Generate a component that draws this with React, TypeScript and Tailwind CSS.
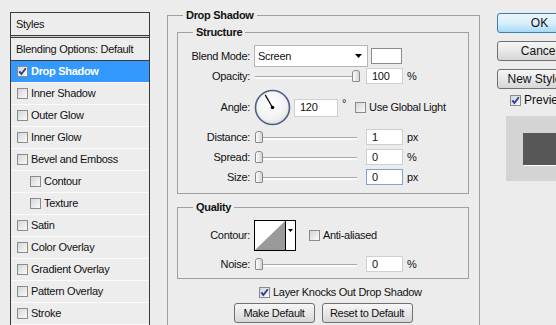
import React from "react";

function Check({ checked }: { checked?: boolean }) {
  return (
    <span className="flex h-[11px] w-[11px] shrink-0 items-center justify-center border border-[#8b8b8b] bg-linear-to-br from-[#d6d6d6] to-[#fafafa]">
      {checked && (
        <svg width="9" height="9" viewBox="0 0 9 9">
          <path d="M1.3 4.3 L3.4 7 L7.8 1.2" stroke="#2b3f98" strokeWidth="1.9" fill="none" />
        </svg>
      )}
    </span>
  );
}

function Slider({ pos }: { pos: number }) {
  return (
    <div className="relative h-[16px] w-[104px] shrink-0">
      <div className="absolute left-[1px] right-[1px] top-[8px] h-[3px] border-t border-[#a9a9a9] bg-[#fafafa]" />
      <svg className="absolute top-[2px]" style={{ left: pos }} width="8" height="12" viewBox="0 0 8 12">
        <defs>
          <linearGradient id={"tg" + pos} x1="0" y1="0" x2="1" y2="0">
            <stop offset="0" stopColor="#ffffff" />
            <stop offset="1" stopColor="#d2d2d2" />
          </linearGradient>
        </defs>
        <path d="M0.5 11 V3 Q0.5 0.5 3 0.5 H5 Q7.5 0.5 7.5 3 V11 Q7.5 11.5 7 11.5 H1 Q0.5 11.5 0.5 11 Z" fill={"url(#tg" + pos + ")"} stroke="#8a8a8a" />
      </svg>
    </div>
  );
}

function Num({ v, focus, w }: { v: string; focus?: boolean; w?: string }) {
  return (
    <div
      className={
        "flex h-[16px] shrink-0 items-center bg-white pl-[5px] " +
        (w ?? "w-[37px] ") +
        " border " +
        (focus ? "border-[#7ea4d2]" : "border-[#cfcfcf]")
      }
    >
      {v}
    </div>
  );
}

function Label({ children }: { children: React.ReactNode }) {
  return <div className="w-[72px] shrink-0 text-right">{children}</div>;
}

function Btn({ children, w }: { children: React.ReactNode; w: string }) {
  return (
    <div
      className={
        "flex h-[20px] shrink-0 items-center justify-center rounded-[3px] border border-[#707070] bg-linear-to-b from-[#f6f6f6] via-[#e8e8e8] to-[#d6d6d6] " +
        w
      }
    >
      {children}
    </div>
  );
}

const items: { label: string; checked?: boolean; active?: boolean; sub?: boolean }[] = [
  { label: "Drop Shadow", checked: true, active: true },
  { label: "Inner Shadow" },
  { label: "Outer Glow" },
  { label: "Inner Glow" },
  { label: "Bevel and Emboss" },
  { label: "Contour", sub: true },
  { label: "Texture", sub: true },
  { label: "Satin" },
  { label: "Color Overlay" },
  { label: "Gradient Overlay" },
  { label: "Pattern Overlay" },
  { label: "Stroke" },
];

export default function App() {
  return (
    <div className="flex h-[325px] w-[556px] overflow-hidden bg-[#ececec] font-['Liberation_Sans',Arial,sans-serif] text-[11px] leading-[13px] tracking-[-0.3px] text-[#111]">
      {/* Left styles list */}
      <div className="ml-[10px] mt-[12px] h-[340px] w-[140px] shrink-0 border border-[#3a3a3a] bg-[#ededed]">
        <div className="flex h-[22px] items-center pl-[5px]">Styles</div>
        <div className="h-[3px] border-y border-[#3a3a3a] bg-[#d0d0d0]" />
        <div className="flex h-[23px] items-center border-b border-[#3a3a3a] pl-[5px]">Blending Options: Default</div>
        {items.map((it) => (
          <div
            key={it.label}
            className={
              "flex h-[22px] items-center gap-[3px] border-b " +
              (it.sub ? "pl-[19px] " : "pl-[6px] ") +
              (it.active ? "border-[#fafafa] bg-[#3399ff] font-bold text-white" : "border-[#fafafa]")
            }
          >
            <Check checked={it.checked} />
            <span>{it.label}</span>
          </div>
        ))}
      </div>

      {/* Middle */}
      <fieldset className="ml-[17px] mt-[8px] h-[340px] w-[313px] shrink-0 border border-[#9f9f9f] p-0 pl-[9px] pr-[10px]">
        <legend className="ml-[6px] px-[3px] font-bold leading-[14px]">Drop Shadow</legend>

        <fieldset className="mt-[3px] w-[292px] border border-[#9f9f9f] p-0 pb-[8px]">
          <legend className="ml-[15px] px-[3px] font-bold leading-[14px]">Structure</legend>
          <div className="mt-[6px] flex h-[22px] items-center">
            <Label>Blend Mode:</Label>
            <div className="ml-[4px] flex h-[22px] w-[114px] items-center justify-between border border-[#b5b5b5] bg-white pl-[3px] pr-[5px]">
              <span>Screen</span>
              <svg width="7" height="4" viewBox="0 0 7 4">
                <path d="M0 0 H7 L3.5 4 Z" fill="#000" />
              </svg>
            </div>
            <div className="ml-[3px] h-[16px] w-[31px] border border-[#8c8c8c] bg-white" />
          </div>
          <div className="mt-[1px] flex h-[16px] items-center">
            <Label>Opacity:</Label>
            <div className="ml-[4px]">
              <Slider pos={98} />
            </div>
            <div className="ml-[8px]">
              <Num v="100" />
            </div>
            <span className="ml-[4px]">%</span>
          </div>
          <div className="mt-[5px] flex h-[37px] items-center">
            <Label>Angle:</Label>
            <svg className="ml-[4px] shrink-0" width="37" height="37" viewBox="0 0 37 37">
              <defs>
                <radialGradient id="dial" cx="0.45" cy="0.4" r="0.65">
                  <stop offset="0" stopColor="#ffffff" />
                  <stop offset="0.7" stopColor="#f1f1f1" />
                  <stop offset="1" stopColor="#d9d9d9" />
                </radialGradient>
              </defs>
              <circle cx="18.5" cy="18.5" r="17" fill="url(#dial)" stroke="#4d5e88" strokeWidth="1.6" />
              <line x1="18.5" y1="18.5" x2="11.2" y2="5.9" stroke="#000" strokeWidth="1.2" />
              <circle cx="18.5" cy="18.5" r="1.8" fill="#000" />
            </svg>
            <div className="ml-[3px]">
              <Num v="120" w="w-[44px] h-[18px] " />
            </div>
            <span className="ml-[4px] self-start pt-[8px]">°</span>
            <div className="ml-[9px] flex items-center gap-[3px]">
              <Check />
              <span>Use Global Light</span>
            </div>
          </div>
          <div className="mt-[3px] flex h-[16px] items-center">
            <Label>Distance:</Label>
            <div className="ml-[4px]">
              <Slider pos={1} />
            </div>
            <div className="ml-[8px]">
              <Num v="1" />
            </div>
            <span className="ml-[4px]">px</span>
          </div>
          <div className="mt-[4px] flex h-[16px] items-center">
            <Label>Spread:</Label>
            <div className="ml-[4px]">
              <Slider pos={1} />
            </div>
            <div className="ml-[8px]">
              <Num v="0" />
            </div>
            <span className="ml-[4px]">%</span>
          </div>
          <div className="mt-[4px] flex h-[16px] items-center">
            <Label>Size:</Label>
            <div className="ml-[4px]">
              <Slider pos={1} />
            </div>
            <div className="ml-[8px]">
              <Num v="0" focus />
            </div>
            <span className="ml-[4px]">px</span>
          </div>
        </fieldset>

        <fieldset className="mt-[6px] w-[292px] border border-[#9f9f9f] p-0 pb-[6px]">
          <legend className="ml-[15px] px-[3px] font-bold leading-[14px]">Quality</legend>
          <div className="mt-[6px] flex h-[31px] items-center">
            <Label>Contour:</Label>
            <svg className="ml-[4px] shrink-0" width="42" height="31" viewBox="0 0 42 31">
              <rect x="0.5" y="0.5" width="41" height="30" fill="#fff" stroke="#000" />
              <polygon points="1,30 31,1 31,30" fill="#9a9a9a" />
              <line x1="31.5" y1="1" x2="31.5" y2="30" stroke="#000" />
              <path d="M34 9 H39 L36.5 12 Z" fill="#000" />
            </svg>
            <div className="ml-[13px] flex items-center gap-[3px]">
              <Check />
              <span>Anti-aliased</span>
            </div>
          </div>
          <div className="mt-[5px] flex h-[16px] items-center">
            <Label>Noise:</Label>
            <div className="ml-[4px]">
              <Slider pos={1} />
            </div>
            <div className="ml-[8px]">
              <Num v="0" />
            </div>
            <span className="ml-[4px]">%</span>
          </div>
        </fieldset>

        <div className="ml-[82px] mt-[7px] flex h-[13px] items-center gap-[3px]">
          <Check checked />
          <span>Layer Knocks Out Drop Shadow</span>
        </div>
        <div className="mt-[4px] flex justify-center gap-[7px]">
          <Btn w="w-[81px]">Make Default</Btn>
          <Btn w="w-[91px]">Reset to Default</Btn>
        </div>
      </fieldset>

      {/* Right column */}
      <div className="ml-[17px] mt-[13px] flex w-[85px] shrink-0 flex-col text-[12px] tracking-normal">
        <div className="flex h-[20px] items-center justify-center rounded-[3px] border border-[#3c7fb1] bg-linear-to-b from-[#eaf6fd] via-[#d9f0fc] to-[#a7d9f5]">
          OK
        </div>
        <div className="mt-[8px]">
          <Btn w="w-[85px]">Cancel</Btn>
        </div>
        <div className="mt-[8px]">
          <Btn w="w-[85px]">New Style...</Btn>
        </div>
        <div className="ml-[13px] mt-[6px] flex h-[11px] items-center gap-[3px]">
          <Check checked />
          <span>Preview</span>
        </div>
        <div className="ml-[9px] mt-[10px] flex h-[65px] w-[67px] items-center justify-center bg-[#d4d4d4]">
          <div className="h-[32px] w-[33px] bg-[#575757] shadow-[1px_1px_0_#ffffff]" />
        </div>
      </div>
    </div>
  );
}
